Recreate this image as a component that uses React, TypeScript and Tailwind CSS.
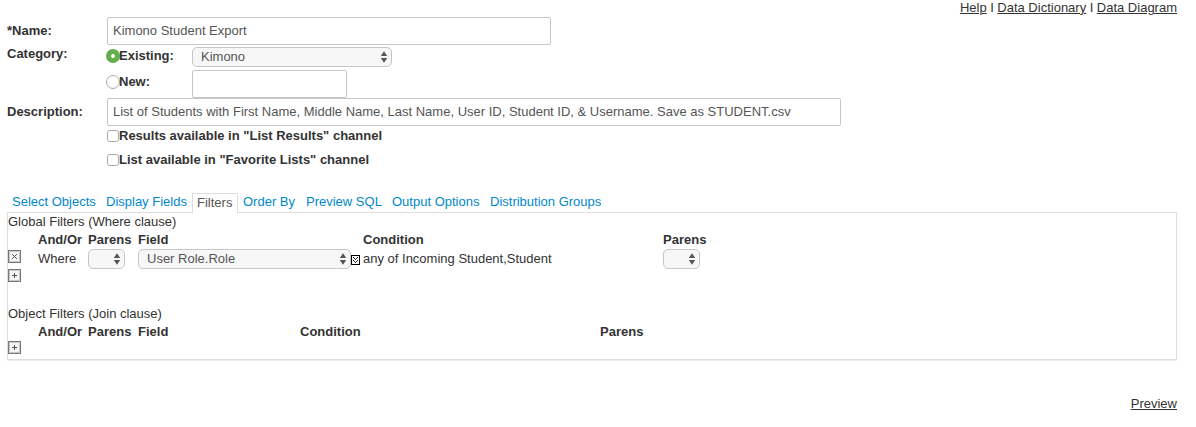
import React from "react";

function Arrows() {
  return (
    <svg className="shrink-0" width="8" height="12" viewBox="0 0 8 12" fill="#555">
      <path d="M4 0.2 7.2 5H0.8zM4 11.8 0.8 7H7.2z" />
    </svg>
  );
}

function Select({ label, className }: { label?: string; className: string }) {
  return (
    <div
      className={`flex h-5 shrink-0 items-center justify-between rounded-[5px] border border-[#c6c6c6] bg-[#f7f7f7] pr-[3px] pl-2 text-[#555] ${className}`}
    >
      <span>{label}</span>
      <Arrows />
    </div>
  );
}

function SquareButton({ kind }: { kind: "add" | "remove" }) {
  return (
    <svg className="block shrink-0" width="13" height="13" viewBox="0 0 13 13" fill="none">
      <rect x="0.5" y="0.5" width="12" height="12" fill="#f4f4f4" stroke="#777" />
      <path d="M1.5 11.5v-10h10v10z" stroke="#c8c8c8" />
      <path d={kind === "add" ? "M6.5 4v5M4 6.5h5" : "M4.1 4.1l4.8 4.8M8.9 4.1l-4.8 4.8"} stroke="#505050" />
    </svg>
  );
}

function Picker() {
  return (
    <svg className="mt-1.5 block shrink-0" width="9" height="10" viewBox="0 0 9 10" fill="none" shapeRendering="crispEdges">
      <rect x="0.5" y="0.5" width="8" height="9" fill="#fff" stroke="#000" />
      <path
        fill="#222"
        d="M2 2h1v1h-1zM6 2h1v1h-1zM3 3h1v1h-1zM5 3h1v1h-1zM4 4h1v1h-1zM2 5h1v1h-1zM6 5h1v1h-1zM3 6h1v1h-1zM5 6h1v1h-1zM4 7h1v1h-1z"
      />
    </svg>
  );
}

function Field({ value, className }: { value?: string; className: string }) {
  return (
    <div
      className={`flex h-7 shrink-0 items-center rounded-[2px] border border-[#c6c6c6] bg-white pl-[5px] whitespace-pre text-[#555] ${className}`}
    >
      {value}
    </div>
  );
}

function CheckRow({ label }: { label: string }) {
  return (
    <div className="flex h-6 items-start pl-[100px] font-bold">
      <span className="mt-1 size-3 shrink-0 rounded-[3px] border border-[#aaa] bg-white" />
      <span className="mt-0.5 leading-4">{label}</span>
    </div>
  );
}

const link = "underline decoration-1 underline-offset-1";

export default function App() {
  return (
    <div className="flex h-[427px] w-[1196px] flex-col overflow-hidden bg-white pr-[19px] pl-[7px] font-['Liberation_Sans',Arial,sans-serif] text-[13px] leading-4 whitespace-nowrap text-[#333]">
      <nav className="flex h-[17px] justify-end gap-[3.5px]">
        <a className={link}>Help</a>
        <span>I</span>
        <a className={link}>Data Dictionary</a>
        <span>I</span>
        <a className={link}>Data Diagram</a>
      </nav>

      <div className="flex h-7 items-center">
        <b className="w-[100px]">*Name:</b>
        <Field value="Kimono Student Export" className="w-[444px]" />
      </div>
      <div className="flex h-[53px]">
        <b className="mt-px w-[99px]">Category:</b>
        <div className="flex flex-col">
          <div className="flex h-[25px] pt-0.5">
            <span className="mt-0.5 flex size-[14px] items-center justify-center rounded-full bg-[#62ae48]">
              <span className="size-1 rounded-full bg-white" />
            </span>
            <b className="-ml-px w-[73px] pt-px">Existing:</b>
            <Select label="Kimono" className="w-[200px]" />
          </div>
          <div className="flex h-7">
            <span className="mt-[5px] size-[14px] rounded-full border border-[#aaa]" />
            <b className="-ml-px w-[73px] pt-1">New:</b>
            <Field className="w-[155px]" />
          </div>
        </div>
      </div>
      <div className="flex h-7 items-center">
        <b className="w-[100px]">Description:</b>
        <Field
          value="List of Students with First Name, Middle Name, Last Name, User ID, Student ID, & Username. Save as STUDENT.csv"
          className="w-[734px]"
        />
      </div>
      <div className="h-[67px]">
        <CheckRow label={'Results available in "List Results" channel'} />
        <CheckRow label={'List available in "Favorite Lists" channel'} />
      </div>

      <div className="z-10 -mb-px flex h-5 pl-[5px] text-[#0088cc]">
        <a className="w-[94px] pt-px">Select Objects</a>
        <a className="w-[86px] pt-px">Display Fields</a>
        <a className="w-[46px] border border-b-0 border-[#ddd] bg-white pt-px pl-[4px] text-[#555]">Filters</a>
        <a className="ml-[5px] w-[63px] pt-px">Order By</a>
        <a className="w-[86px] pt-px">Preview SQL</a>
        <a className="w-[98px] pt-px">Output Options</a>
        <a className="pt-px">Distribution Groups</a>
      </div>

      <section className="h-[148px] shrink-0 border border-[#ddd] pt-px shadow-[0_1px_1px_rgba(0,0,0,0.06)]">
        <div className="h-[18px]">Global Filters (Where clause)</div>
        <div className="flex h-[17px] font-bold">
          <span className="ml-[30px] w-[50px]">And/Or</span>
          <span className="w-[50px]">Parens</span>
          <span className="w-[225px]">Field</span>
          <span className="w-[300px]">Condition</span>
          <span>Parens</span>
        </div>
        <div className="flex h-5">
          <div className="w-[30px] pt-px">
            <SquareButton kind="remove" />
          </div>
          <span className="w-[50px] pt-0.5">Where</span>
          <Select className="mr-[13px] w-[37px]" />
          <Select label="User Role.Role" className="w-[213px]" />
          <Picker />
          <span className="ml-[3px] w-[300px] pt-0.5">any of Incoming Student,Student</span>
          <Select className="w-[37px]" />
        </div>
        <div className="h-[37px]">
          <SquareButton kind="add" />
        </div>
        <div className="h-[18px]">Object Filters (Join clause)</div>
        <div className="flex h-[17px] font-bold">
          <span className="ml-[30px] w-[50px]">And/Or</span>
          <span className="w-[50px]">Parens</span>
          <span className="w-[162px]">Field</span>
          <span className="w-[300px]">Condition</span>
          <span>Parens</span>
        </div>
        <SquareButton kind="add" />
      </section>

      <div className="mt-9 flex justify-end">
        <a className={link}>Preview</a>
      </div>
    </div>
  );
}
